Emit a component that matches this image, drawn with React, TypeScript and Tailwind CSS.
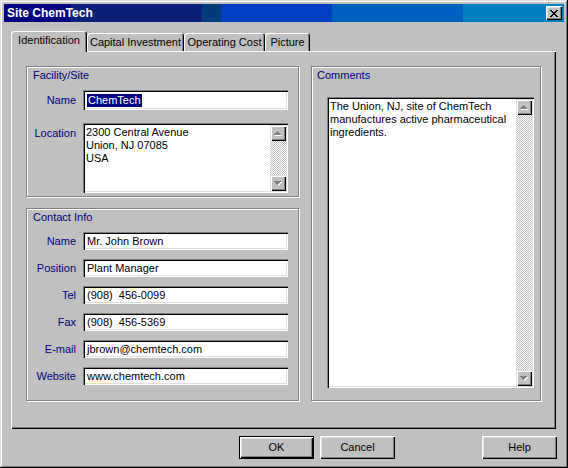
import React from 'react';

const raised =
  'shadow-[inset_1px_1px_#ffffff,inset_-1px_-1px_#000000,inset_-2px_-2px_#808080,inset_2px_2px_#dfdfdf]';
const sunken =
  'shadow-[inset_1px_1px_#808080,inset_2px_2px_#000000,inset_-1px_-1px_#ffffff,inset_-2px_-2px_#dfdfdf]';
const etched = 'border border-[#808080] shadow-[inset_1px_1px_#ffffff,1px_1px_#ffffff]';

const Arrow: React.FC<{ dir: 'up' | 'down' }> = ({ dir }) => {
  const rows = dir === 'up' ? [[3, 1], [2, 3], [1, 5], [0, 7]] : [[0, 7], [1, 5], [2, 3], [3, 1]];
  return (
    <svg width="8" height="5" viewBox="0 0 8 5" shapeRendering="crispEdges">
      {rows.map(([x, w], y) => (
        <rect key={`w${y}`} x={x + 1} y={y + 1} width={w} height={1} fill="#ffffff" />
      ))}
      {rows.map(([x, w], y) => (
        <rect key={`g${y}`} x={x} y={y} width={w} height={1} fill="#808080" />
      ))}
    </svg>
  );
};

const ScrollButton: React.FC<{ dir: 'up' | 'down' }> = ({ dir }) => (
  <div className="w-[16px] h-[16px] shrink-0 bg-[#c0c0c0] flex items-center justify-center shadow-[inset_1px_1px_#dfdfdf,inset_2px_2px_#ffffff,inset_-1px_-1px_#000000,inset_-2px_-2px_#808080]">
    <Arrow dir={dir} />
  </div>
);

const ScrollBar: React.FC = () => (
  <div className="w-[16px] h-full flex flex-col">
    <ScrollButton dir="up" />
    <div className="flex-1 bg-[image:repeating-conic-gradient(#c0c0c0_0%_25%,#ffffff_0%_50%)] bg-[length:2px_2px]" />
    <ScrollButton dir="down" />
  </div>
);

const TextField: React.FC<{ value: string; tall?: boolean; selected?: boolean }> = ({ value, tall, selected }) => (
  <div
    className={`${tall ? 'h-[20px]' : 'h-[18px]'} w-[205px] bg-white pl-[4px] flex items-center text-[11px] leading-[13px] text-black whitespace-pre ${sunken}`}
  >
    {selected ? <span className="bg-[#000080] text-white px-[1px]">{value}</span> : value}
  </div>
);

const TextArea: React.FC<{ lines: string[]; w: string; h: string }> = ({ lines, w, h }) => (
  <div className={`${w} ${h} bg-white p-[2px] flex ${sunken}`}>
    <div className="flex-1 pl-[1px] pt-[1px] text-[11px] leading-[13px] text-black whitespace-nowrap">
      {lines.map((l) => (
        <div key={l}>{l}</div>
      ))}
    </div>
    <ScrollBar />
  </div>
);

const FieldRow: React.FC<{ label: string; value: string; tall?: boolean; selected?: boolean }> = ({
  label,
  value,
  tall,
  selected,
}) => (
  <div className="flex items-center">
    <span className="w-[49px] text-right text-[#000080] text-[11px] leading-[13px]">{label}</span>
    <div className="ml-[7px]">
      <TextField value={value} tall={tall} selected={selected} />
    </div>
  </div>
);

const Tab: React.FC<{ label: string; w: string; active?: boolean }> = ({ label, w, active }) => (
  <div
    className={`${w} ${
      active ? 'h-[21px] -mb-[1px] relative z-10 pb-[2px]' : 'h-[18px]'
    } bg-[#c0c0c0] rounded-t-[3px] flex items-center justify-center text-[11px] text-black shadow-[inset_1px_1px_#ffffff,inset_-1px_0_#000000,inset_-2px_0_#808080]`}
  >
    {label}
  </div>
);

const Button: React.FC<{ label: string; isDefault?: boolean }> = ({ label, isDefault }) => (
  <div
    className={`w-[75px] h-[23px] bg-[#c0c0c0] flex items-center justify-center text-[11px] text-black ${
      isDefault ? 'border border-black' : ''
    } ${raised}`}
  >
    {label}
  </div>
);

const CloseGlyph: React.FC = () => {
  const rows = [[0, 6], [1, 5], [2, 4], [3, 3], [4, 2], [5, 1], [6, 0]];
  return (
    <svg width="8" height="7" viewBox="0 0 8 7" shapeRendering="crispEdges">
      {rows.map(([a, b], y) => (
        <g key={y} fill="#000000">
          <rect x={a} y={y} width={2} height={1} />
          <rect x={b} y={y} width={2} height={1} />
        </g>
      ))}
    </svg>
  );
};

export default function App() {
  return (
    <div className="w-[568px] h-[468px] bg-[#c0c0c0] p-[4px] font-['Liberation_Sans',Arial,sans-serif] select-none shadow-[inset_-1px_-1px_#000000,inset_1px_1px_#dfdfdf,inset_-2px_-2px_#808080,inset_2px_2px_#ffffff]">
      {/* Title bar */}
      <div className="h-[18px] pl-[3px] pr-[2px] flex items-center justify-between bg-[image:linear-gradient(90deg,#000080_0px,#000080_67px,#0a1f78_67px,#0a1f78_198px,#023c7a_198px,#023c7a_217px,#003ec2_217px,#003ec2_328px,#0060c0_328px,#0060c0_459px,#0080c0_459px)]">
        <span className="text-white font-bold text-[12px] leading-[14px]">Site ChemTech</span>
        <div className="w-[16px] h-[14px] bg-[#c0c0c0] flex items-center justify-center shadow-[inset_1px_1px_#ffffff,inset_-1px_-1px_#000000,inset_-2px_-2px_#808080,inset_2px_2px_#dfdfdf]">
          <CloseGlyph />
        </div>
      </div>

      {/* Body */}
      <div className="pt-[9px] pl-[7px] pr-[8px]">
        {/* Tabs */}
        <div className="h-[20px] flex items-end">
          <Tab label="Identification" w="w-[76px]" active />
          <Tab label="Capital Investment" w="w-[97px]" />
          <Tab label="Operating Cost" w="w-[81px]" />
          <Tab label="Picture" w="w-[45px]" />
        </div>

        {/* Tab panel */}
        <div className="h-[378px] pt-[15px] px-[15px] flex gap-[12px] shadow-[inset_1px_1px_#ffffff,inset_-1px_-1px_#000000,inset_-2px_-2px_#808080]">
          {/* Left column */}
          <div className="w-[273px] flex flex-col gap-[11px]">
            <div className={`h-[131px] ${etched}`}>
              <div className="pl-[6px] pt-[2px] text-[11px] leading-[13px] text-[#000080]">Facility/Site</div>
              <div className="mt-[8px]">
                <FieldRow label="Name" value="ChemTech" tall selected />
              </div>
              <div className="mt-[13px] flex items-start">
                <span className="w-[49px] pt-[4px] text-right text-[#000080] text-[11px] leading-[13px]">
                  Location
                </span>
                <div className="ml-[7px]">
                  <TextArea
                    w="w-[205px]"
                    h="h-[70px]"
                    lines={['2300 Central Avenue', 'Union, NJ 07085', 'USA']}
                  />
                </div>
              </div>
            </div>

            <div className={`h-[193px] ${etched}`}>
              <div className="pl-[6px] pt-[2px] text-[11px] leading-[13px] text-[#000080]">Contact Info</div>
              <div className="mt-[8px] flex flex-col gap-[9px]">
                <FieldRow label="Name" value="Mr. John Brown" />
                <FieldRow label="Position" value="Plant Manager" />
                <FieldRow label="Tel" value="(908)  456-0099" />
                <FieldRow label="Fax" value="(908)  456-5369" />
                <FieldRow label="E-mail" value="jbrown@chemtech.com" />
                <FieldRow label="Website" value="www.chemtech.com" />
              </div>
            </div>
          </div>

          {/* Right column */}
          <div className={`w-[230px] h-[335px] ${etched}`}>
            <div className="pl-[5px] pt-[2px] text-[11px] leading-[13px] text-[#000080]">Comments</div>
            <div className="mt-[15px] ml-[15px]">
              <TextArea
                w="w-[207px]"
                h="h-[291px]"
                lines={['The Union, NJ, site of ChemTech', 'manufactures active pharmaceutical', 'ingredients.']}
              />
            </div>
          </div>
        </div>

        {/* Buttons */}
        <div className="mt-[7px] -mr-[1px] flex pl-[228px]">
          <Button label="OK" isDefault />
          <div className="ml-[6px]">
            <Button label="Cancel" />
          </div>
          <div className="ml-auto">
            <Button label="Help" />
          </div>
        </div>
      </div>
    </div>
  );
}
